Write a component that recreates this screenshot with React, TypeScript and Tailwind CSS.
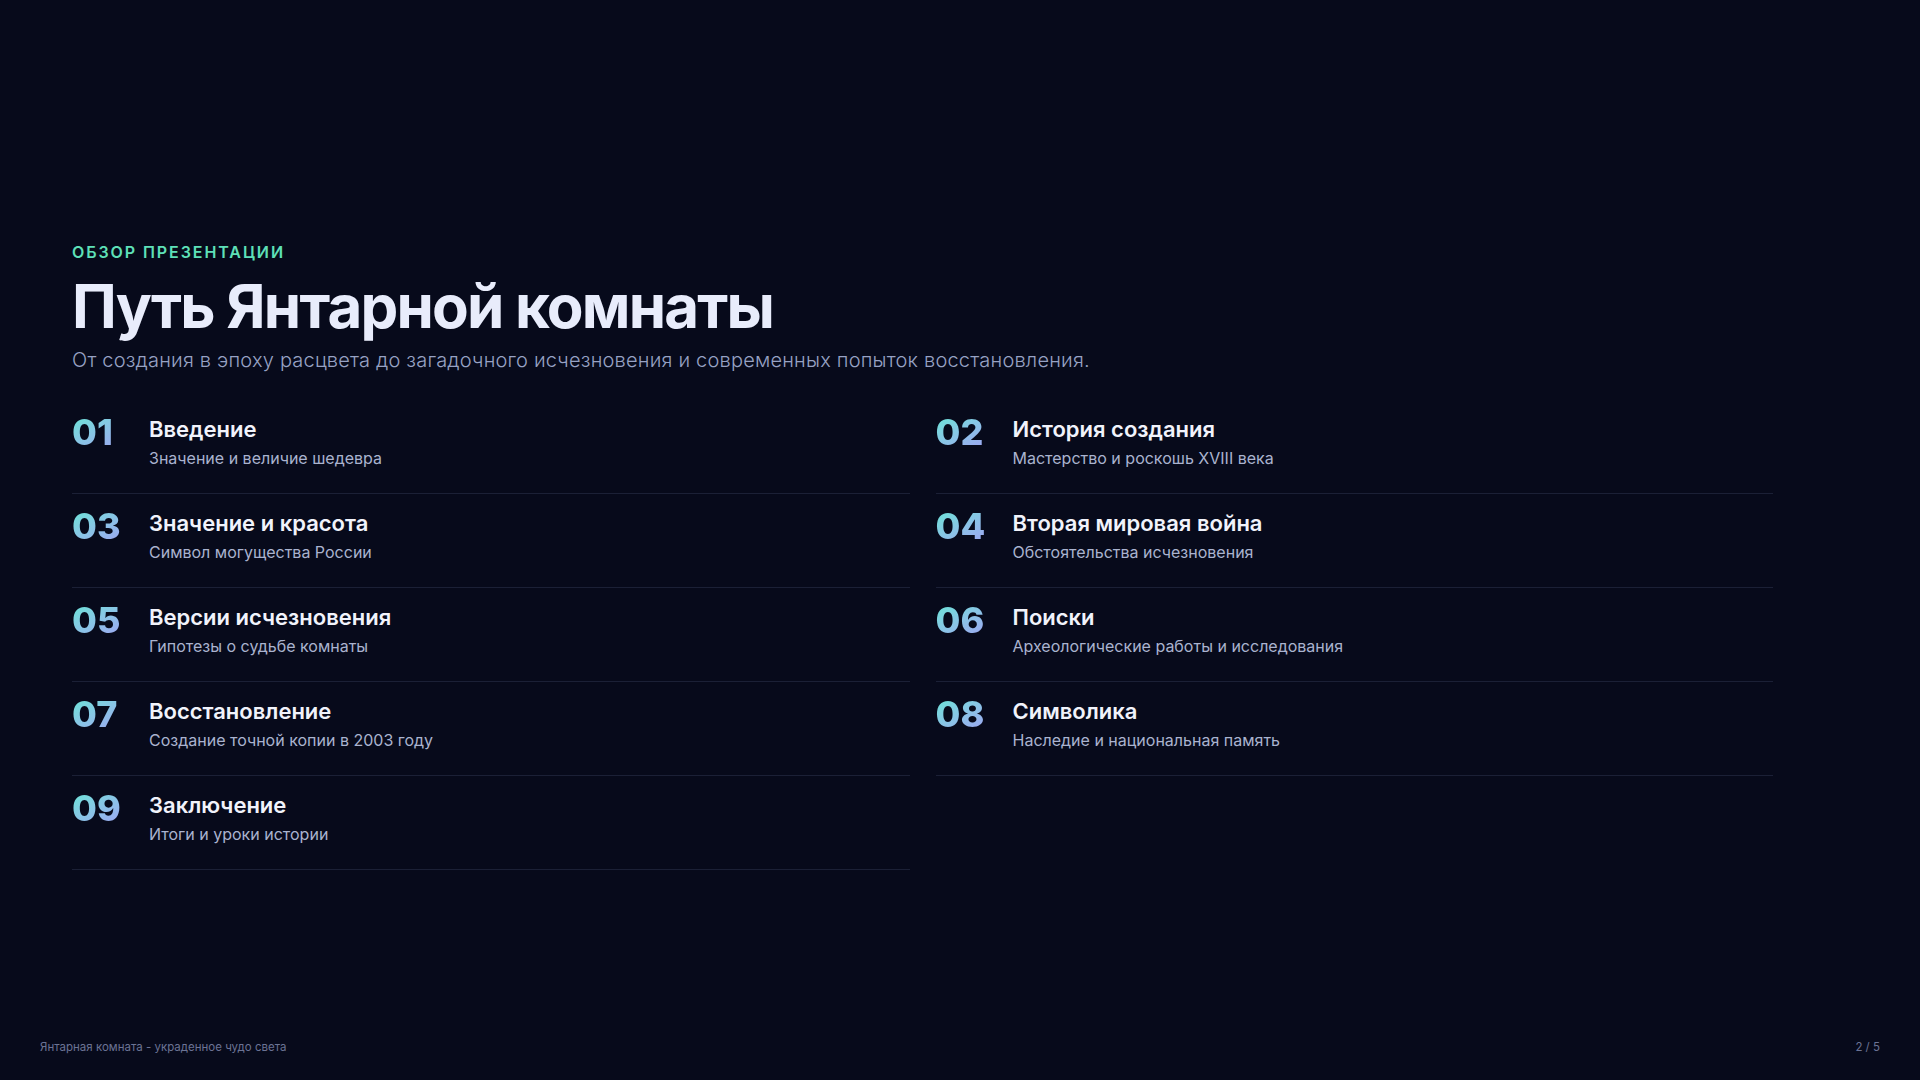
const items = [
  ['01', 'Введение', 'Значение и величие шедевра'],
  ['02', 'История создания', 'Мастерство и роскошь XVIII века'],
  ['03', 'Значение и красота', 'Символ могущества России'],
  ['04', 'Вторая мировая война', 'Обстоятельства исчезновения'],
  ['05', 'Версии исчезновения', 'Гипотезы о судьбе комнаты'],
  ['06', 'Поиски', 'Археологические работы и исследования'],
  ['07', 'Восстановление', 'Создание точной копии в 2003 году'],
  ['08', 'Символика', 'Наследие и национальная память'],
  ['09', 'Заключение', 'Итоги и уроки истории'],
]

export default function App() {
  return (
    <div
      className="w-[1920px] h-[1080px] bg-[#070a1b] flex flex-col overflow-hidden"
      style={{ fontFamily: 'Inter, "Noto Sans", sans-serif' }}
    >
      <main className="flex-1 flex flex-col pl-[72px] pr-[147px] pt-[244px]">
        <div className="text-[#5ee0b8] text-[16px] font-semibold tracking-[0.12em] leading-none">ОБЗОР ПРЕЗЕНТАЦИИ</div>
        <h1 className="mt-[10px] text-[#e8ecfb] text-[60px] font-bold tracking-[-0.03em] leading-[72px]">
          Путь Янтарной комнаты
        </h1>
        <p className="mt-[4px] text-[#97a2c4] text-[20px] leading-[28px] tracking-[0.01em] font-light">
          От создания в эпоху расцвета до загадочного исчезновения и современных попыток восстановления.
        </p>
        <div className="mt-[26px] grid grid-cols-2 gap-x-[26px]">
          {items.map(([n, t, d]) => (
            <div key={n} className="flex items-start border-b border-[#1b2036] pt-[10px] pb-[23px]">
              <div className="w-[77px] shrink-0 text-[36px] font-extrabold leading-[44px] bg-gradient-to-br from-[#5eead4] to-[#a78bfa] bg-clip-text text-transparent">
                {n}
              </div>
              <div className="pt-[4px]">
                <div className="text-[#f1f3fb] text-[22px] font-semibold leading-[30px]">{t}</div>
                <div className="mt-[2px] text-[#aab3cf] text-[16px] leading-[24px]">{d}</div>
              </div>
            </div>
          ))}
        </div>
      </main>
      <footer className="flex justify-between items-center px-[40px] pb-[24px] text-[11.5px] text-[#6b7394]">
        <span>Янтарная комната - украденное чудо света</span>
        <span>2 / 5</span>
      </footer>
    </div>
  )
}
